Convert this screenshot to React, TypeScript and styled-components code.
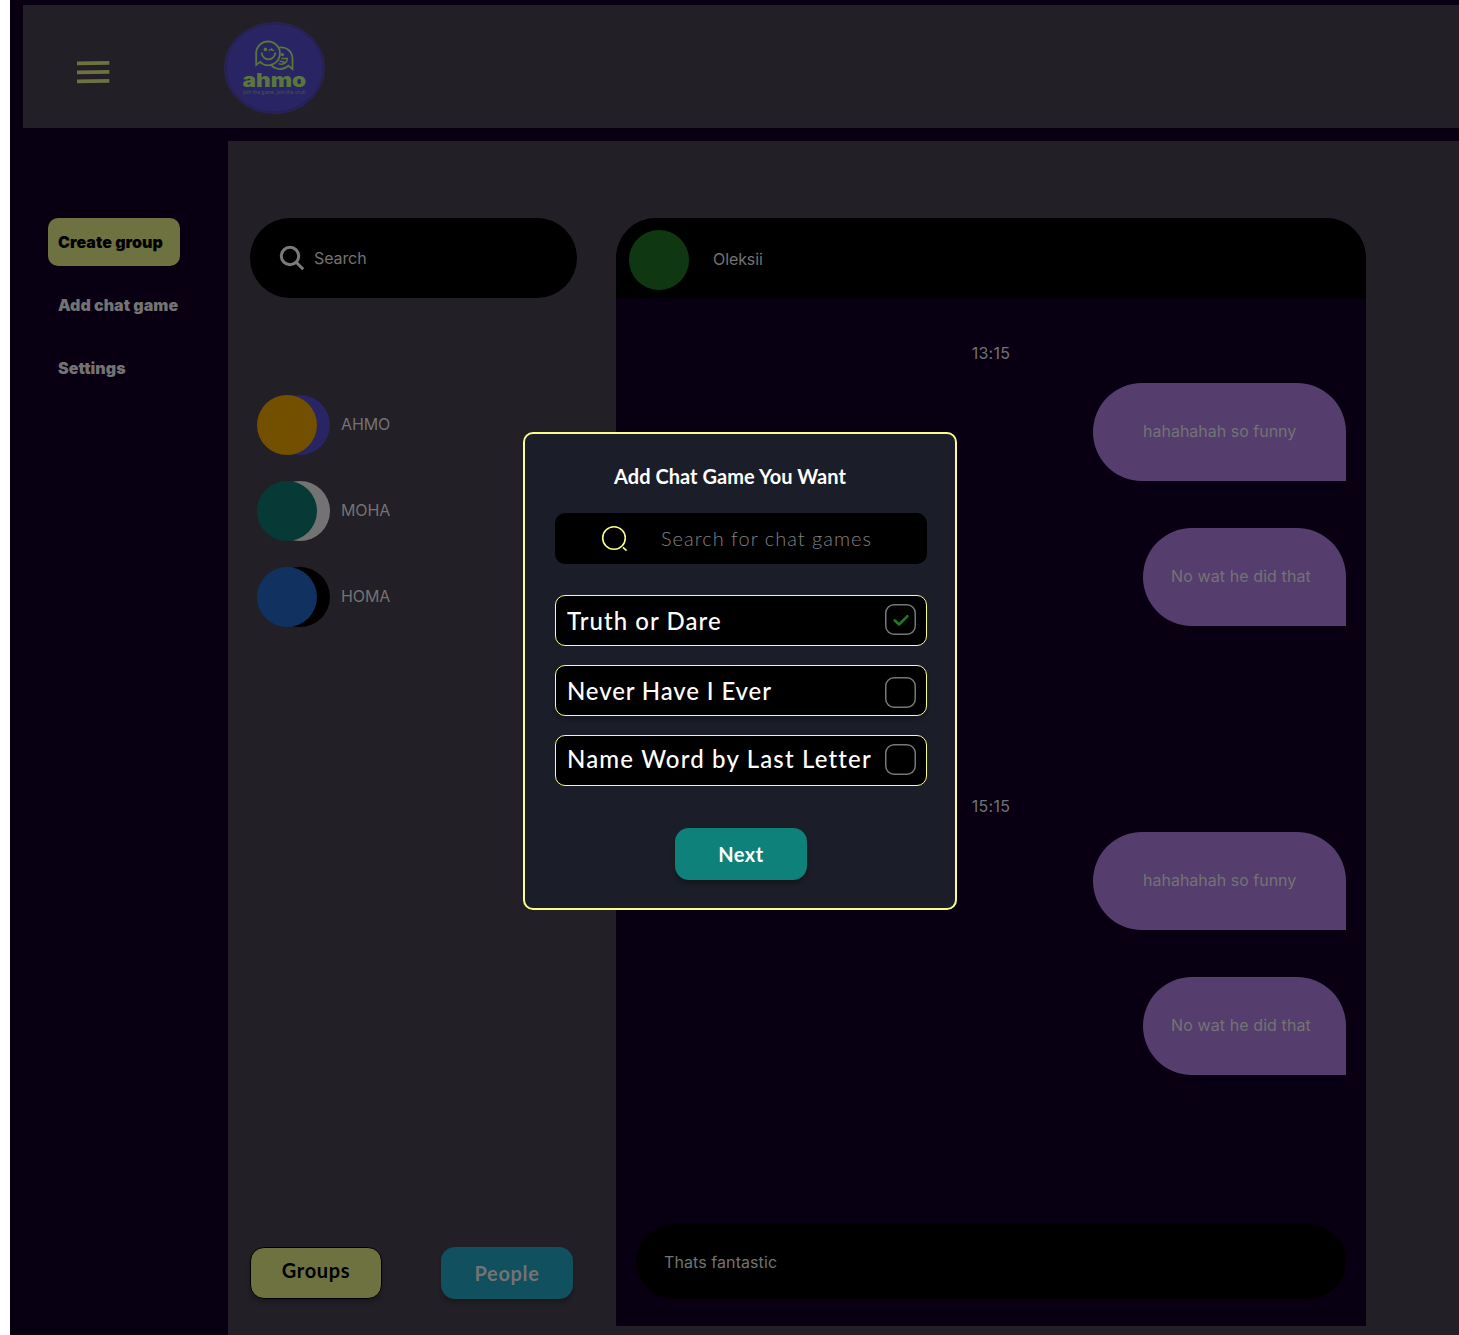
import React, { useState } from "react";
import styled, { createGlobalStyle } from "styled-components";

const color = {
  night: "#080012",
  panel: "#221f26",
  black: "#000000",
  olive: "#6d7240",
  muted: "#737373",
  bubble: "#553e6d",
  modal: "#1b1e28",
  lemon: "#f9fe87",
};

const body = `"Inter", "Liberation Sans", sans-serif`;
const rounded = `"Lato", "Open Sans", sans-serif`;

const GlobalStyle = createGlobalStyle`
  *, *::before, *::after { box-sizing: border-box; }
  body { margin: 0; background: #ffffff; overflow: hidden; }
  button { border: 0; padding: 0; cursor: pointer; }
`;

const Page = styled.div`
  position: relative;
  width: 1459px;
  height: 1335px;
  padding: 5px 0 0 10px;
  overflow: hidden;
  display: flex;
  flex-direction: column;
  gap: 13px;
  background: linear-gradient(to right, #ffffff 10px, ${color.night} 10px);
  font-family: ${body};
  font-size: 16px;
  font-weight: 400;
  line-height: 20px;
  color: ${color.muted};
`;

const Header = styled.header`
  height: 123px;
  flex: none;
  margin-left: 13px;
  padding: 17px 0 0 54px;
  display: flex;
  align-items: flex-start;
  background: ${color.panel};
`;

const MenuButton = styled.button`
  width: 33px;
  height: 24px;
  margin: 38px 114px 0 0;
  background: none;
  line-height: 0;
`;

const Columns = styled.div`
  flex: 1;
  min-height: 0;
  display: flex;
`;

const Sidebar = styled.nav`
  width: 218px;
  padding: 77px 0 0 38px;
  display: flex;
  flex-direction: column;
  align-items: flex-start;
  gap: 15px;
`;

const NavItem = styled.button<{ $active?: boolean }>`
  width: 132px;
  height: 48px;
  padding-left: 10px;
  border-radius: 10px;
  text-align: left;
  white-space: nowrap;
  font: 900 16px/48px ${body};
  letter-spacing: 0.03px;
  background: ${(p) => (p.$active ? color.olive : "transparent")};
  color: ${(p) => (p.$active ? color.black : color.muted)};
`;

const Workspace = styled.main`
  flex: 1;
  padding: 77px 0 0 22px;
  display: flex;
  gap: 39px;
  background: ${color.panel};
`;

const Contacts = styled.section`
  width: 327px;
  display: flex;
  flex-direction: column;
`;

const SearchBox = styled.div`
  height: 80px;
  padding-left: 29px;
  display: flex;
  align-items: center;
  gap: 9px;
  border-radius: 40px;
  background: ${color.black};
  letter-spacing: -0.1px;
`;

const GroupList = styled.ul`
  list-style: none;
  margin: 97px 0 0;
  padding: 0 0 0 7px;
  display: flex;
  flex-direction: column;
  gap: 26px;
`;

const GroupRow = styled.li`
  height: 60px;
  display: flex;
  align-items: center;
  gap: 11px;
`;

const PersonName = styled.span`
  padding-bottom: 2px;
  letter-spacing: -0.1px;
`;

const AvatarPair = styled.div`
  display: flex;
  width: 73px;
`;

const Avatar = styled.span<{ $fill: string; $behind?: boolean }>`
  flex: none;
  width: 60px;
  height: 60px;
  border-radius: 50%;
  background: ${(p) => p.$fill};
  margin-left: ${(p) => (p.$behind ? "-47px" : "0")};
  z-index: ${(p) => (p.$behind ? 0 : 1)};
`;

const Tabs = styled.div`
  margin-top: auto;
  height: 88px;
  display: flex;
  gap: 59px;
`;

const Tab = styled.button<{ $selected?: boolean }>`
  width: 132px;
  height: 52px;
  border-radius: 14px;
  border: ${(p) => (p.$selected ? `1px solid ${color.black}` : "0")};
  padding-bottom: ${(p) => (p.$selected ? "6px" : "0")};
  box-shadow: 0 4px 4px rgba(0, 0, 0, 0.2);
  background: ${(p) => (p.$selected ? color.olive : "#10505f")};
  color: ${(p) => (p.$selected ? color.black : color.muted)};
  font: 700 20px/24px ${rounded};
  letter-spacing: 0.65px;
`;

const Chat = styled.section`
  width: 750px;
  height: 1108px;
  display: flex;
  flex-direction: column;
  background: ${color.night};
  border-radius: 40px 40px 0 0;
  overflow: hidden;
`;

const ChatHeader = styled.div`
  height: 80px;
  flex: none;
  padding: 4px 0 0 13px;
  display: flex;
  align-items: center;
  gap: 24px;
  background: ${color.black};
`;

const Messages = styled.div<{ $top: number; $gap: number }>`
  display: flex;
  flex-direction: column;
  align-items: flex-end;
  padding: ${(p) => p.$top}px 20px 0;

  time {
    align-self: center;
    margin-bottom: ${(p) => p.$gap}px;
    letter-spacing: 0.3px;
  }
`;

const Bubble = styled.p<{ $indent: number; $width: number; $spacing: number }>`
  width: ${(p) => p.$width}px;
  height: 98px;
  margin: 0 0 47px;
  padding-left: ${(p) => p.$indent}px;
  border-radius: 49px 49px 0 49px;
  background: ${color.bubble};
  white-space: nowrap;
  line-height: 96px;
  letter-spacing: ${(p) => p.$spacing}px;
`;

const Composer = styled.div`
  height: 75px;
  margin: auto 20px 27px;
  padding-left: 28px;
  border-radius: 38px;
  background: ${color.black};
  line-height: 77px;
  letter-spacing: 0.08px;
`;

const Modal = styled.div`
  position: absolute;
  left: 523px;
  top: 432px;
  width: 434px;
  height: 478px;
  padding: 30px 28px 0 30px;
  display: flex;
  flex-direction: column;
  align-items: center;
  border: 2px solid ${color.lemon};
  border-radius: 10px;
  background: ${color.modal};
  font-family: ${rounded};
`;

const ModalTitle = styled.h2`
  margin: 0 22px 24px 0;
  font: 700 20px/25px ${rounded};
  letter-spacing: 0.05px;
  color: #ffffff;
  white-space: nowrap;
`;

const GameSearch = styled.div`
  flex: none;
  width: 372px;
  height: 51px;
  margin-bottom: 31px;
  padding-left: 46px;
  display: flex;
  align-items: center;
  gap: 32px;
  border-radius: 10px;
  background: ${color.black};
  color: #808080;
  font: 300 20px/25px ${rounded};
  letter-spacing: 1px;
`;

const Options = styled.div`
  display: flex;
  flex-direction: column;
  gap: 19px;
  margin-bottom: 42px;
`;

const Option = styled.button<{ $raised: boolean }>`
  width: 372px;
  height: 51px;
  padding: 0 10px 0 11px;
  display: flex;
  align-items: flex-start;
  justify-content: space-between;
  border: 1px solid ${color.lemon};
  border-radius: 10px;
  background: ${color.black};
  color: #ffffff;
  box-shadow: ${(p) => (p.$raised ? "0 4px 4px rgba(0, 0, 0, 0.2)" : "none")};
`;

const OptionLabel = styled.span<{ $spacing: number; $top: number }>`
  margin-top: ${(p) => p.$top}px;
  font: 500 24px/30px ${rounded};
  letter-spacing: ${(p) => p.$spacing}px;
  white-space: nowrap;
`;

const CheckBox = styled.span<{ $top: number }>`
  flex: none;
  width: 31px;
  height: 31px;
  margin-top: ${(p) => p.$top}px;
  box-shadow: inset 0 0 0 1.5px #777777;
  border-radius: 9px;
  line-height: 0;
`;

const NextButton = styled.button`
  flex: none;
  width: 132px;
  height: 52px;
  border-radius: 14px;
  background: #0d817a;
  color: #ffffff;
  box-shadow: 0 4px 4px rgba(0, 0, 0, 0.25);
  font: 700 20px/25px ${rounded};
  letter-spacing: 0.5px;
`;

const Logo = () => (
  <svg width="101" height="92" viewBox="224 22 101 92" aria-label="ahmo">
    <ellipse cx="274.5" cy="68" rx="50" ry="45.5" fill="#272056" stroke="#29245f" strokeWidth="1" />
    <ellipse cx="274.5" cy="68" rx="48.3" ry="44" fill="#292463" stroke="#25213f" strokeWidth="0.6" />
    <g fill="none" stroke="#5b763c" strokeWidth="1.8" strokeLinejoin="miter">
      <path d="M256.2 64.9V54.6a11.9 11.9 0 1 1 7.6 9.9q-1.8-.8-3.6-2.6z" />
      <path d="M278.9 47.6c7.6-1.4 13.6 4 13.6 11.3v10.2l-4-3.4c-4.8 4.6-12.8 4.6-17.4-.8" />
      <path d="M261.7 52.6a6.8 6.8 0 0 0 13.6 0" />
      <path d="M281.4 58.5h5.9c0 4.4-4.2 6.9-9 5.2M279.4 60.9l5.6 1.6" strokeWidth="1.4" />
      <path d="M268.6 50.6l3.1-1.6.3 1.4h2" strokeWidth="1.2" />
    </g>
    <circle cx="265.4" cy="49.4" r="1.8" fill="#5b763c" />
    <circle cx="282.4" cy="54.6" r="1.7" fill="#5b763c" />
    <text x="242.6" y="87.4" fontFamily="Inter, sans-serif" fontWeight="900" fontSize="18.6" textLength="63.6" lengthAdjust="spacingAndGlyphs" fill="#5b763c">ahmo</text>
    <text x="243" y="94.2" fontFamily="Lato, sans-serif" fontSize="4.8" textLength="63" lengthAdjust="spacingAndGlyphs" fill="#48534f">join the game, join the chat!</text>
  </svg>
);

const MenuIcon = () => (
  <svg width="33" height="24" viewBox="0 0 33 24" fill="none" stroke={color.olive} strokeWidth="3.9">
    <path d="M0 3.4L32.3 2.9M0 12.4L32.3 11.9M0 21.4L32.3 20.9" />
  </svg>
);

const SearchIcon = () => (
  <svg width="26" height="26" viewBox="0 0 26 26" fill="none" stroke="#7b7b7b" strokeWidth="3">
    <circle cx="11" cy="11" r="8.7" />
    <path d="M17.2 17.2L24.2 24.2" />
  </svg>
);

const LensIcon = () => (
  <svg width="28" height="28" viewBox="0 0 28 28" fill="none" stroke={color.lemon} strokeWidth="1.6">
    <circle cx="13" cy="13" r="11.3" />
    <path d="M22 22.3L25.6 25.6" />
  </svg>
);

const CheckIcon = () => (
  <svg width="31" height="31" viewBox="0 0 31 31" fill="none" stroke="#1f7a26" strokeWidth="2.7">
    <path d="M9.8 16.4L14.2 20.4L22.4 12.1" strokeLinecap="round" strokeLinejoin="round" />
  </svg>
);

const groups = [
  { name: "AHMO", front: "#735000", back: "#292463" },
  { name: "MOHA", front: "#073a36", back: "#737373" },
  { name: "HOMA", front: "#113160", back: "#000000" },
];

const games = [
  { name: "Truth or Dare", spacing: 1.05, labelTop: 10, boxTop: 8, raised: false },
  { name: "Never Have I Ever", spacing: 0.87, labelTop: 10, boxTop: 11, raised: true },
  { name: "Name Word by Last Letter", spacing: 1.16, labelTop: 8, boxTop: 8, raised: false },
];

const conversations = [
  { time: "13:15", top: 45, gap: 20 },
  { time: "15:15", top: 123, gap: 16 },
];

export default function App() {
  const [picked, setPicked] = useState("Truth or Dare");

  return (
    <>
      <GlobalStyle />
      <Page>
        <Header>
          <MenuButton aria-label="Menu"><MenuIcon /></MenuButton>
          <Logo />
        </Header>
        <Columns>
          <Sidebar>
            <NavItem $active>Create group</NavItem>
            <NavItem>Add chat game</NavItem>
            <NavItem>Settings</NavItem>
          </Sidebar>
          <Workspace>
            <Contacts>
              <SearchBox><SearchIcon />Search</SearchBox>
              <GroupList>
                {groups.map((g) => (
                  <GroupRow key={g.name}>
                    <AvatarPair>
                      <Avatar $fill={g.front} />
                      <Avatar $fill={g.back} $behind />
                    </AvatarPair>
                    <PersonName>{g.name}</PersonName>
                  </GroupRow>
                ))}
              </GroupList>
              <Tabs>
                <Tab $selected>Groups</Tab>
                <Tab>People</Tab>
              </Tabs>
            </Contacts>
            <Chat>
              <ChatHeader>
                <Avatar $fill="#0f3812" />
                <PersonName>Oleksii</PersonName>
              </ChatHeader>
              {conversations.map((c) => (
                <Messages key={c.time} $top={c.top} $gap={c.gap}>
                  <time>{c.time}</time>
                  <Bubble $width={253} $indent={50} $spacing={0}>hahahahah so funny</Bubble>
                  <Bubble $width={203} $indent={28} $spacing={0.1}>No wat he did that</Bubble>
                </Messages>
              ))}
              <Composer>Thats fantastic</Composer>
            </Chat>
          </Workspace>
        </Columns>
        <Modal role="dialog">
          <ModalTitle>Add Chat Game You Want</ModalTitle>
          <GameSearch><LensIcon />Search for chat games</GameSearch>
          <Options>
            {games.map((g) => (
              <Option key={g.name} $raised={g.raised} onClick={() => setPicked(g.name)}>
                <OptionLabel $spacing={g.spacing} $top={g.labelTop}>{g.name}</OptionLabel>
                <CheckBox $top={g.boxTop}>{picked === g.name && <CheckIcon />}</CheckBox>
              </Option>
            ))}
          </Options>
          <NextButton>Next</NextButton>
        </Modal>
      </Page>
    </>
  );
}
